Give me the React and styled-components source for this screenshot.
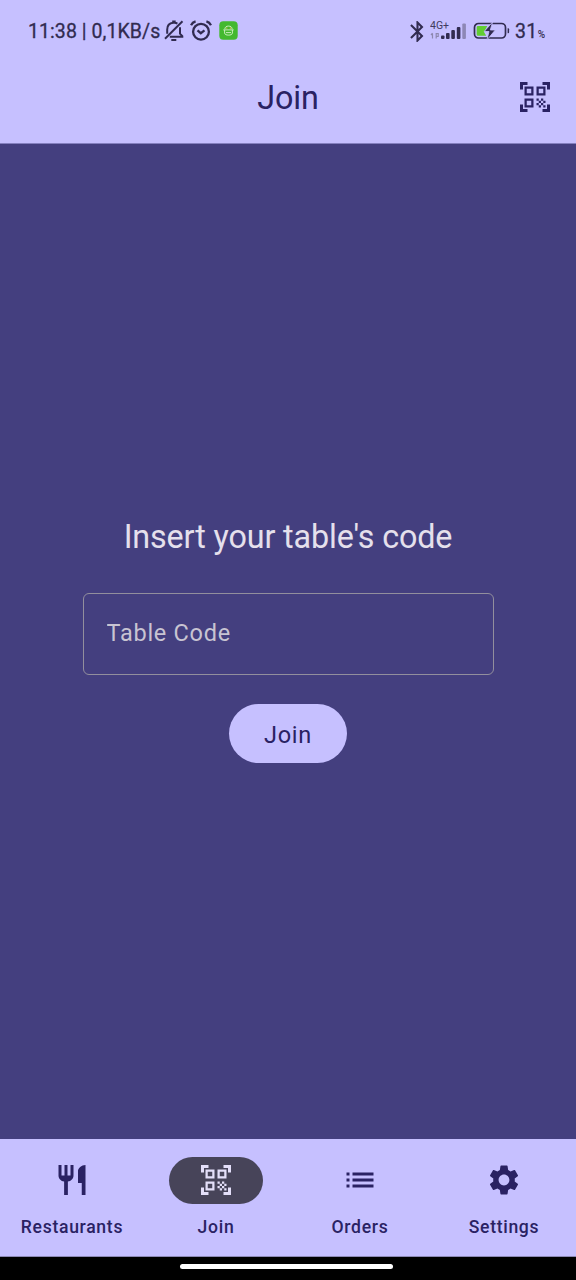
import React from 'react';
import styled, { createGlobalStyle } from 'styled-components';
import { MdBluetooth, MdList, MdQrCodeScanner, MdRestaurant, MdSettings } from 'react-icons/md';

const GlobalStyle = createGlobalStyle`
  * { box-sizing: border-box; }
  body { margin: 0; font-family: Roboto, "Liberation Sans", sans-serif; }
`;

const Screen = styled.div`
  width: 576px;
  height: 1280px;
  display: flex;
  flex-direction: column;
  background: #443f7f;
  color: #2a2263;
`;

const Header = styled.header`
  height: 143px;
  background: #c6c0ff;
  border-bottom: 1px solid #8580bf;
  box-sizing: content-box;
  margin-bottom: -1px;
`;

const StatusBar = styled.div`
  height: 62px;
  padding: 0 31px 0 28px;
  display: flex;
  justify-content: space-between;
  align-items: center;
  color: #312b50;
`;

const StatusGroup = styled.div`
  display: flex;
  align-items: center;
  height: 24px;
  svg { display: block; flex: none; }
`;

const StatusText = styled.span`
  font-size: 19.5px;
  line-height: 24px;
  font-weight: 400;
  -webkit-text-stroke: 0.3px currentColor;
  letter-spacing: ${(p) => p.$spacing || '0px'};
  margin-top: 2px;
  white-space: pre;
`;

const Percent = styled.span`
  font-size: 10px;
  line-height: 12px;
  font-weight: 500;
  margin-top: 7px;
`;

const TopBar = styled.div`
  height: 81px;
  padding: 0 23px;
  display: grid;
  grid-template-columns: 36px 1fr 36px;
  align-items: start;
`;

const Title = styled.h1`
  grid-column: 2;
  margin: 16px 0 0;
  text-align: center;
  font-weight: 400;
  font-size: 32.3px;
  letter-spacing: -0.1px;
  line-height: 41px;
`;

const ScanButton = styled.button`
  margin: 17px 0 0;
  padding: 0;
  width: 36px;
  height: 36px;
  border: 0;
  background: none;
  color: inherit;
  svg { display: block; }
`;

const Main = styled.main`
  flex: 1;
  display: flex;
  flex-direction: column;
  align-items: center;
  padding-top: 374px;
`;

const Prompt = styled.h2`
  margin: 0;
  font-weight: 400;
  font-size: 32.3px;
  letter-spacing: -0.13px;
  line-height: 41px;
  color: #e5e0ec;
`;

const CodeInput = styled.input`
  margin-top: 34.5px;
  width: 411px;
  height: 82px;
  padding: 0 23px 2px;
  background: transparent;
  border: 1.5px solid #928f9d;
  border-radius: 6px;
  outline: none;
  font: 400 23.5px/35px Roboto, "Liberation Sans", sans-serif;
  letter-spacing: 0.73px;
  color: #e5e0ec;
  &::placeholder { color: #c8c4d2; opacity: 1; }
`;

const JoinButton = styled.button`
  margin-top: 29.5px;
  width: 118px;
  height: 59px;
  padding: 3px 0 0;
  border: 0;
  border-radius: 30px;
  background: #c6c0ff;
  color: #2a2263;
  font: 400 23.5px/35px Roboto, "Liberation Sans", sans-serif;
  letter-spacing: 0.73px;
`;

const NavBar = styled.nav`
  height: 118px;
  display: grid;
  grid-template-columns: repeat(4, 1fr);
  background: #c6c0ff;
  border-bottom: 1px solid #8d89b5;
`;

const NavItem = styled.div`
  display: flex;
  flex-direction: column;
  align-items: center;
  padding-top: 18px;
`;

const Pill = styled.div`
  width: 94px;
  height: 47px;
  border-radius: 24px;
  display: flex;
  align-items: center;
  justify-content: center;
  padding-bottom: 1px;
  background: ${(p) => (p.$active ? '#474459' : 'transparent')};
  color: ${(p) => (p.$active ? '#e4dff9' : '#2a2263')};
`;

const NavLabel = styled.span`
  margin-top: 12px;
  font-size: 17.6px;
  line-height: 23px;
  font-weight: 500;
  letter-spacing: 0.68px;
`;

const GestureBar = styled.div`
  height: 23px;
  background: #000;
  display: flex;
  justify-content: center;
  padding: 7px 4px 0 0;
`;

const GestureHandle = styled.div`
  width: 213px;
  height: 5px;
  border-radius: 3px;
  background: #fff;
`;

const MutedBell = () => (
  <svg width="20" height="22" viewBox="0 0 20 22" fill="none" stroke="currentColor" strokeWidth="2" style={{ marginLeft: 4 }}>
    <path d="M3.2 13.8V9.5C3.2 5.8 5.6 3.2 9.2 2.8V1.5h1.5v1.3c1 .1 1.9.4 2.7.9M16 7.2v6.5l2.3 2.4v.7H5.8" />
    <path d="M18.5 1.3 1 18.7" />
    <path d="M7.3 20h5" />
  </svg>
);

const AlarmClock = () => (
  <svg width="22" height="22" viewBox="0 0 22 22" fill="none" stroke="currentColor" strokeWidth="2.3" style={{ marginLeft: 6 }}>
    <circle cx="11" cy="11.7" r="7.9" />
    <path d="m7.5 10.4 3.3 2.8 3.7-2.8" />
    <path d="M1 5.2c.9-1.8 2.5-3.2 4.6-3.8M21 5.2c-.9-1.8-2.5-3.2-4.6-3.8" />
  </svg>
);

const AppBadge = () => (
  <svg width="19" height="19" viewBox="0 0 19 19" style={{ marginLeft: 7, marginBottom: 1 }}>
    <rect x=".3" y=".3" width="18.4" height="18.4" rx="4" fill="#43b92f" />
    <g fill="none" stroke="#d6f2ca" strokeWidth=".9">
      <path d="M5.8 8.2c.2-2.2 1.6-3.1 3.7-3.1s3.5.9 3.7 3.1M4.3 8.9h10.4M5.6 9v3.2c.5 1.5 1.9 1.9 3.9 1.9s3.4-.4 3.9-1.9V9M7 11.6h5" />
    </g>
    <path d="M7.3 7.2h1M10.8 7.2h1.4" stroke="#e7b64a" strokeWidth="1.2" />
  </svg>
);

const CellSignal = () => (
  <svg width="37" height="24" viewBox="0 0 37 24">
    <text x="0" y="10" fontFamily="Roboto, sans-serif" fontSize="10.5" textLength="19" fill="#413b60">4G+</text>
    <g fill="none" stroke="#8d87ae" strokeWidth="1.2">
      <path d="M2.5 19.5v-5M1 16l1.5-1.8M6.2 19.5v-5h2v3h-2" />
    </g>
    <g fill="currentColor">
      <rect x="11" y="16.5" width="3.5" height="3.5" rx="1" />
      <rect x="16" y="14" width="3.6" height="6" rx="1" />
      <rect x="21.3" y="11" width="3.6" height="9" rx="1" />
      <rect x="26.8" y="8" width="3.6" height="12" rx="1" />
      <rect x="32.3" y="4.5" width="3.6" height="15.5" rx="1" fill="#8d87b5" />
    </g>
  </svg>
);

const Battery = () => (
  <svg width="38" height="20" viewBox="0 0 38 20" style={{ marginLeft: 6, marginRight: 4 }}>
    <rect x="1.5" y="2.5" width="31" height="14.5" rx="4" fill="none" stroke="currentColor" strokeWidth="1.7" />
    <path d="M5 5h9.3L11 11l2.2 3.7H5a1.3 1.3 0 0 1-1.3-1.3V6.3A1.3 1.3 0 0 1 5 5Z" fill="#61cc32" />
    <path d="m19.6 1-8.4 9.5h4.8L13.9 19l8.4-10h-5Z" fill="currentColor" stroke="#c6c0ff" strokeWidth=".8" />
    <path d="M34.6 7.3h.5q1 0 1 1v3q0 1-1 1h-.5Z" fill="currentColor" />
  </svg>
);

const tabs = [
  { label: 'Restaurants', Icon: MdRestaurant },
  { label: 'Join', Icon: MdQrCodeScanner, active: true },
  { label: 'Orders', Icon: MdList },
  { label: 'Settings', Icon: MdSettings },
];

export default function App() {
  return (
    <>
      <GlobalStyle />
      <Screen>
        <Header>
          <StatusBar>
            <StatusGroup>
              <StatusText $spacing="0.07px">11:38 | 0,1KB/s</StatusText>
              <MutedBell />
              <AlarmClock />
              <AppBadge />
            </StatusGroup>
            <StatusGroup>
              <MdBluetooth size={25} />
              <CellSignal />
              <Battery />
              <StatusText $spacing="0.3px">31</StatusText>
              <Percent>%</Percent>
            </StatusGroup>
          </StatusBar>
          <TopBar>
            <Title>Join</Title>
            <ScanButton aria-label="Scan code"><MdQrCodeScanner size={36} /></ScanButton>
          </TopBar>
        </Header>
        <Main>
          <Prompt>Insert your table's code</Prompt>
          <CodeInput placeholder="Table Code" />
          <JoinButton>Join</JoinButton>
        </Main>
        <NavBar>
          {tabs.map(({ label, Icon, active }) => (
            <NavItem key={label}>
              <Pill $active={active}><Icon size={36} /></Pill>
              <NavLabel>{label}</NavLabel>
            </NavItem>
          ))}
        </NavBar>
        <GestureBar><GestureHandle /></GestureBar>
      </Screen>
    </>
  );
}
